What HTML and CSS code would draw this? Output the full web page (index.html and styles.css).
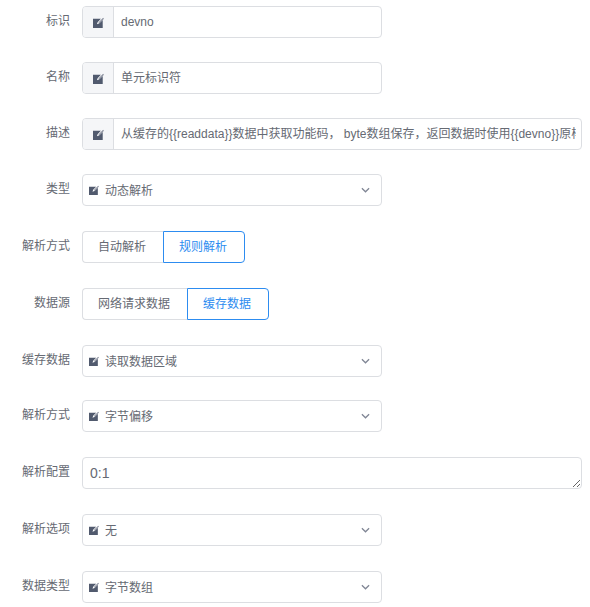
FILE: index.html
```html
<!DOCTYPE html>
<html lang="zh-CN">
<head>
    <meta charset="UTF-8">
    <meta name="viewport" content="width=device-width, initial-scale=1.0">
    <title>解析配置</title>
    <link rel="stylesheet" href="styles.css">
</head>
<body>
    <svg class="icon-defs" width="0" height="0">
        <symbol id="icon-edit" viewBox="0 0 12 12">
            <path d="M0 2h8.6L5 5.6 4.2 8l2.4-.8L10.6 3.4V12H0z"/>
            <path class="icon-tip" d="M6.4 5.4 11 .8l1 1-4.6 4.6-1.4.4z"/>
        </symbol>
    </svg>

    <form class="form">
        <div class="form-item">
            <label class="form-label">标识</label>
            <div class="input-group">
                <span class="input-prefix"><svg class="icon"><use href="#icon-edit"/></svg></span>
                <div class="input-text">devno</div>
            </div>
        </div>

        <div class="form-item">
            <label class="form-label">名称</label>
            <div class="input-group">
                <span class="input-prefix"><svg class="icon"><use href="#icon-edit"/></svg></span>
                <div class="input-text">单元标识符</div>
            </div>
        </div>

        <div class="form-item">
            <label class="form-label">描述</label>
            <div class="input-group input-group-wide">
                <span class="input-prefix"><svg class="icon"><use href="#icon-edit"/></svg></span>
                <div class="input-text">从缓存的{{readdata}}数据中获取功能码， byte数组保存，返回数据时使用{{devno}}原样返回</div>
            </div>
        </div>

        <div class="form-item form-item-loose">
            <label class="form-label">类型</label>
            <div class="select">
                <svg class="icon select-icon"><use href="#icon-edit"/></svg>
                <span class="select-text">动态解析</span>
                <svg class="chevron" viewBox="0 0 10 6"><path d="M1 1l4 4 4-4"/></svg>
            </div>
        </div>

        <div class="form-item form-item-loose">
            <label class="form-label">解析方式</label>
            <div class="radio-group">
                <span class="radio-btn">自动解析</span>
                <span class="radio-btn radio-btn-active">规则解析</span>
            </div>
        </div>

        <div class="form-item form-item-loose">
            <label class="form-label">数据源</label>
            <div class="radio-group">
                <span class="radio-btn">网络请求数据</span>
                <span class="radio-btn radio-btn-active">缓存数据</span>
            </div>
        </div>

        <div class="form-item form-item-tight">
            <label class="form-label">缓存数据</label>
            <div class="select">
                <svg class="icon select-icon"><use href="#icon-edit"/></svg>
                <span class="select-text">读取数据区域</span>
                <svg class="chevron" viewBox="0 0 10 6"><path d="M1 1l4 4 4-4"/></svg>
            </div>
        </div>

        <div class="form-item form-item-loose">
            <label class="form-label">解析方式</label>
            <div class="select">
                <svg class="icon select-icon"><use href="#icon-edit"/></svg>
                <span class="select-text">字节偏移</span>
                <svg class="chevron" viewBox="0 0 10 6"><path d="M1 1l4 4 4-4"/></svg>
            </div>
        </div>

        <div class="form-item form-item-loose">
            <label class="form-label">解析配置</label>
            <textarea class="textarea" rows="1">0:1</textarea>
        </div>

        <div class="form-item form-item-loose">
            <label class="form-label">解析选项</label>
            <div class="select">
                <svg class="icon select-icon"><use href="#icon-edit"/></svg>
                <span class="select-text">无</span>
                <svg class="chevron" viewBox="0 0 10 6"><path d="M1 1l4 4 4-4"/></svg>
            </div>
        </div>

        <div class="form-item">
            <label class="form-label">数据类型</label>
            <div class="select">
                <svg class="icon select-icon"><use href="#icon-edit"/></svg>
                <span class="select-text">字节数组</span>
                <svg class="chevron" viewBox="0 0 10 6"><path d="M1 1l4 4 4-4"/></svg>
            </div>
        </div>
    </form>
</body>
</html>
```

FILE: styles.css
```css
html, body {
    height: 100%;
}
body {
    font-family: "Liberation Sans", "Noto Sans CJK SC", sans-serif;
    font-size: 12px;
    color: #666a73;
    background-color: #fff;
    margin: 0;
    padding: 6px 0 0;
    box-sizing: border-box;
    overflow: hidden;
}
.icon-defs {
    display: block;
    position: absolute;
}
.form {
    display: flex;
    flex-direction: column;
}
.form-item {
    display: flex;
    align-items: flex-start;
    margin-bottom: 24px;
}
.form-item-loose {
    margin-bottom: 25px;
}
.form-item-tight {
    margin-bottom: 23px;
}
.form-label {
    flex: 0 0 70px;
    margin-right: 12px;
    text-align: right;
    line-height: 30px;
}
.input-group {
    display: flex;
    width: 300px;
    height: 32px;
    box-sizing: border-box;
    border: 1px solid #dcdee2;
    border-radius: 4px;
    overflow: hidden;
}
.input-group-wide {
    width: 500px;
}
.input-prefix {
    display: flex;
    flex: 0 0 31px;
    align-items: center;
    justify-content: center;
    background-color: #f5f6f8;
    border-right: 1px solid #dcdee2;
    box-sizing: border-box;
}
.input-text {
    flex: 1;
    min-width: 0;
    margin: 0 5px 0 7px;
    line-height: 31px;
    white-space: nowrap;
    overflow: hidden;
}
.icon {
    width: 11px;
    height: 11px;
    fill: #515a6e;
}
.icon-tip {
    fill: #8d92a0;
}
.select {
    display: flex;
    align-items: center;
    width: 300px;
    height: 32px;
    box-sizing: border-box;
    padding: 0 11px 0 6px;
    border: 1px solid #dcdee2;
    border-radius: 4px;
}
.select-icon {
    width: 10px;
    height: 10px;
    margin-right: 6px;
}
.select-text {
    flex: 1;
    padding-bottom: 2px;
}
.chevron {
    width: 9px;
    height: 6px;
    fill: none;
    stroke: #808695;
    stroke-width: 1.4;
}
.radio-group {
    display: flex;
}
.radio-btn {
    height: 32px;
    box-sizing: border-box;
    padding: 0 17px 0 15px;
    line-height: 30px;
    border: 1px solid #dcdee2;
}
.radio-btn:first-child {
    border-right: 0;
    border-radius: 4px 0 0 4px;
}
.radio-btn-active {
    color: #2d8cf0;
    border-color: #2d8cf0;
    border-radius: 0 4px 4px 0;
}
.textarea {
    display: block;
    width: 500px;
    height: 32px;
    box-sizing: border-box;
    padding: 5px 7px;
    font-family: inherit;
    font-size: 14px;
    line-height: 20px;
    color: #666a73;
    border: 1px solid #dcdee2;
    border-radius: 4px;
    outline: none;
}
```
